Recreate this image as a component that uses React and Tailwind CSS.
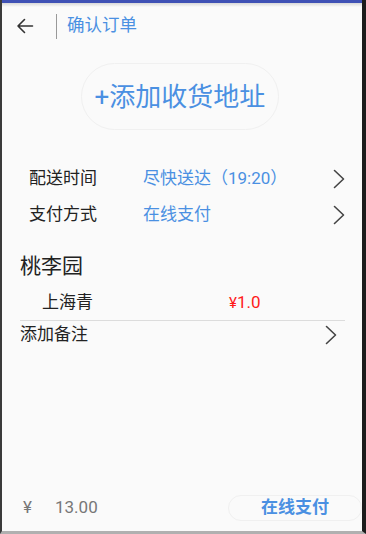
import React from "react";

const Chevron = ({ className = "" }) => (
  <svg width="12" height="20" viewBox="0 0 12 20" className={className} fill="none" stroke="#444" strokeWidth="1.6" strokeLinecap="round" strokeLinejoin="round">
    <path d="M1.5 1.5 L10.5 10 L1.5 18.5" />
  </svg>
);

export default function App() {
  return (
    <div
      className="w-[366px] h-[534px] flex flex-col bg-[#fafafa] border-l-2 border-l-[#3a3a3a] border-r-[4px] border-r-[#1c1c1c] border-b-[3px] border-b-[#b0b0b0] overflow-hidden"
      style={{ fontFamily: "Roboto, 'Noto Sans CJK SC', sans-serif" }}
    >
      <div className="h-[3px] bg-[#3f51b5] shrink-0" />
      <div className="h-[4px] shrink-0 bg-gradient-to-b from-[#d8d8d8] to-[#fafafa]" />
      {/* header */}
      <div className="flex items-center h-[34px] mt-[2px] shrink-0">
        <div className="w-[54px] flex justify-start pl-[14px]">
          <svg width="18" height="16" viewBox="0 0 18 16" fill="none" stroke="#333" strokeWidth="1.6" strokeLinecap="round" strokeLinejoin="round">
            <path d="M16.5 8 H2 M8.5 1.5 L2 8 L8.5 14.5" />
          </svg>
        </div>
        <div className="w-px h-[25px] bg-[#999]" />
        <div className="ml-[10px] text-[17.5px] text-[#4a90e2] leading-none">确认订单</div>
      </div>

      {/* address button */}
      <div className="flex justify-center mt-[20px] pr-[4px]">
        <div className="h-[67px] px-[13px] rounded-full border border-[#f0f0f0] flex items-center text-[26px] text-[#4a90e2] leading-none">
          +添加收货地址
        </div>
      </div>

      {/* rows */}
      <div className="mt-[31px] flex flex-col">
        <div className="flex items-center h-[36px]">
          <div className="pl-[27px] w-[141px] text-[17px] text-[#222]">配送时间</div>
          <div className="flex-1 text-[17px] text-[#4a90e2]">尽快送达（19:20）</div>
          <Chevron className="mr-[17px]" />
        </div>
        <div className="flex items-center h-[36px]">
          <div className="pl-[27px] w-[141px] text-[17px] text-[#222]">支付方式</div>
          <div className="flex-1 text-[17px] text-[#4a90e2]">在线支付</div>
          <Chevron className="mr-[17px]" />
        </div>
      </div>

      <div className="mt-[18px] pl-[18px] text-[21px] text-[#222] leading-[30px]">桃李园</div>

      <div className="mt-[8px] flex items-center h-[28px]">
        <div className="pl-[40px] w-[227px] text-[17px] text-[#222]">上海青</div>
        <div className="text-[17px] text-[#ff1a1a]"><span className="text-[15px]">¥</span>1.0</div>
      </div>

      <div className="ml-[18px] mr-[17px] h-px bg-[#dcdcdc] mt-[3px]" />

      <div className="flex items-center h-[28px]">
        <div className="pl-[18px] flex-1 text-[17px] text-[#222]">添加备注</div>
        <Chevron className="mr-[25px]" />
      </div>

      <div className="flex-1" />

      {/* bottom bar */}
      <div className="flex items-center h-[26px] mb-[10px]">
        <div className="pl-[21px] w-[53px] text-[17px] text-[#777]">¥</div>
        <div className="flex-1 text-[17px] text-[#777]">13.00</div>
        <div className="w-[134px] h-[26px] rounded-full border border-[#f0f0f0] flex items-center justify-center text-[17px] font-semibold text-[#4a90e2]">
          在线支付
        </div>
      </div>
    </div>
  );
}
